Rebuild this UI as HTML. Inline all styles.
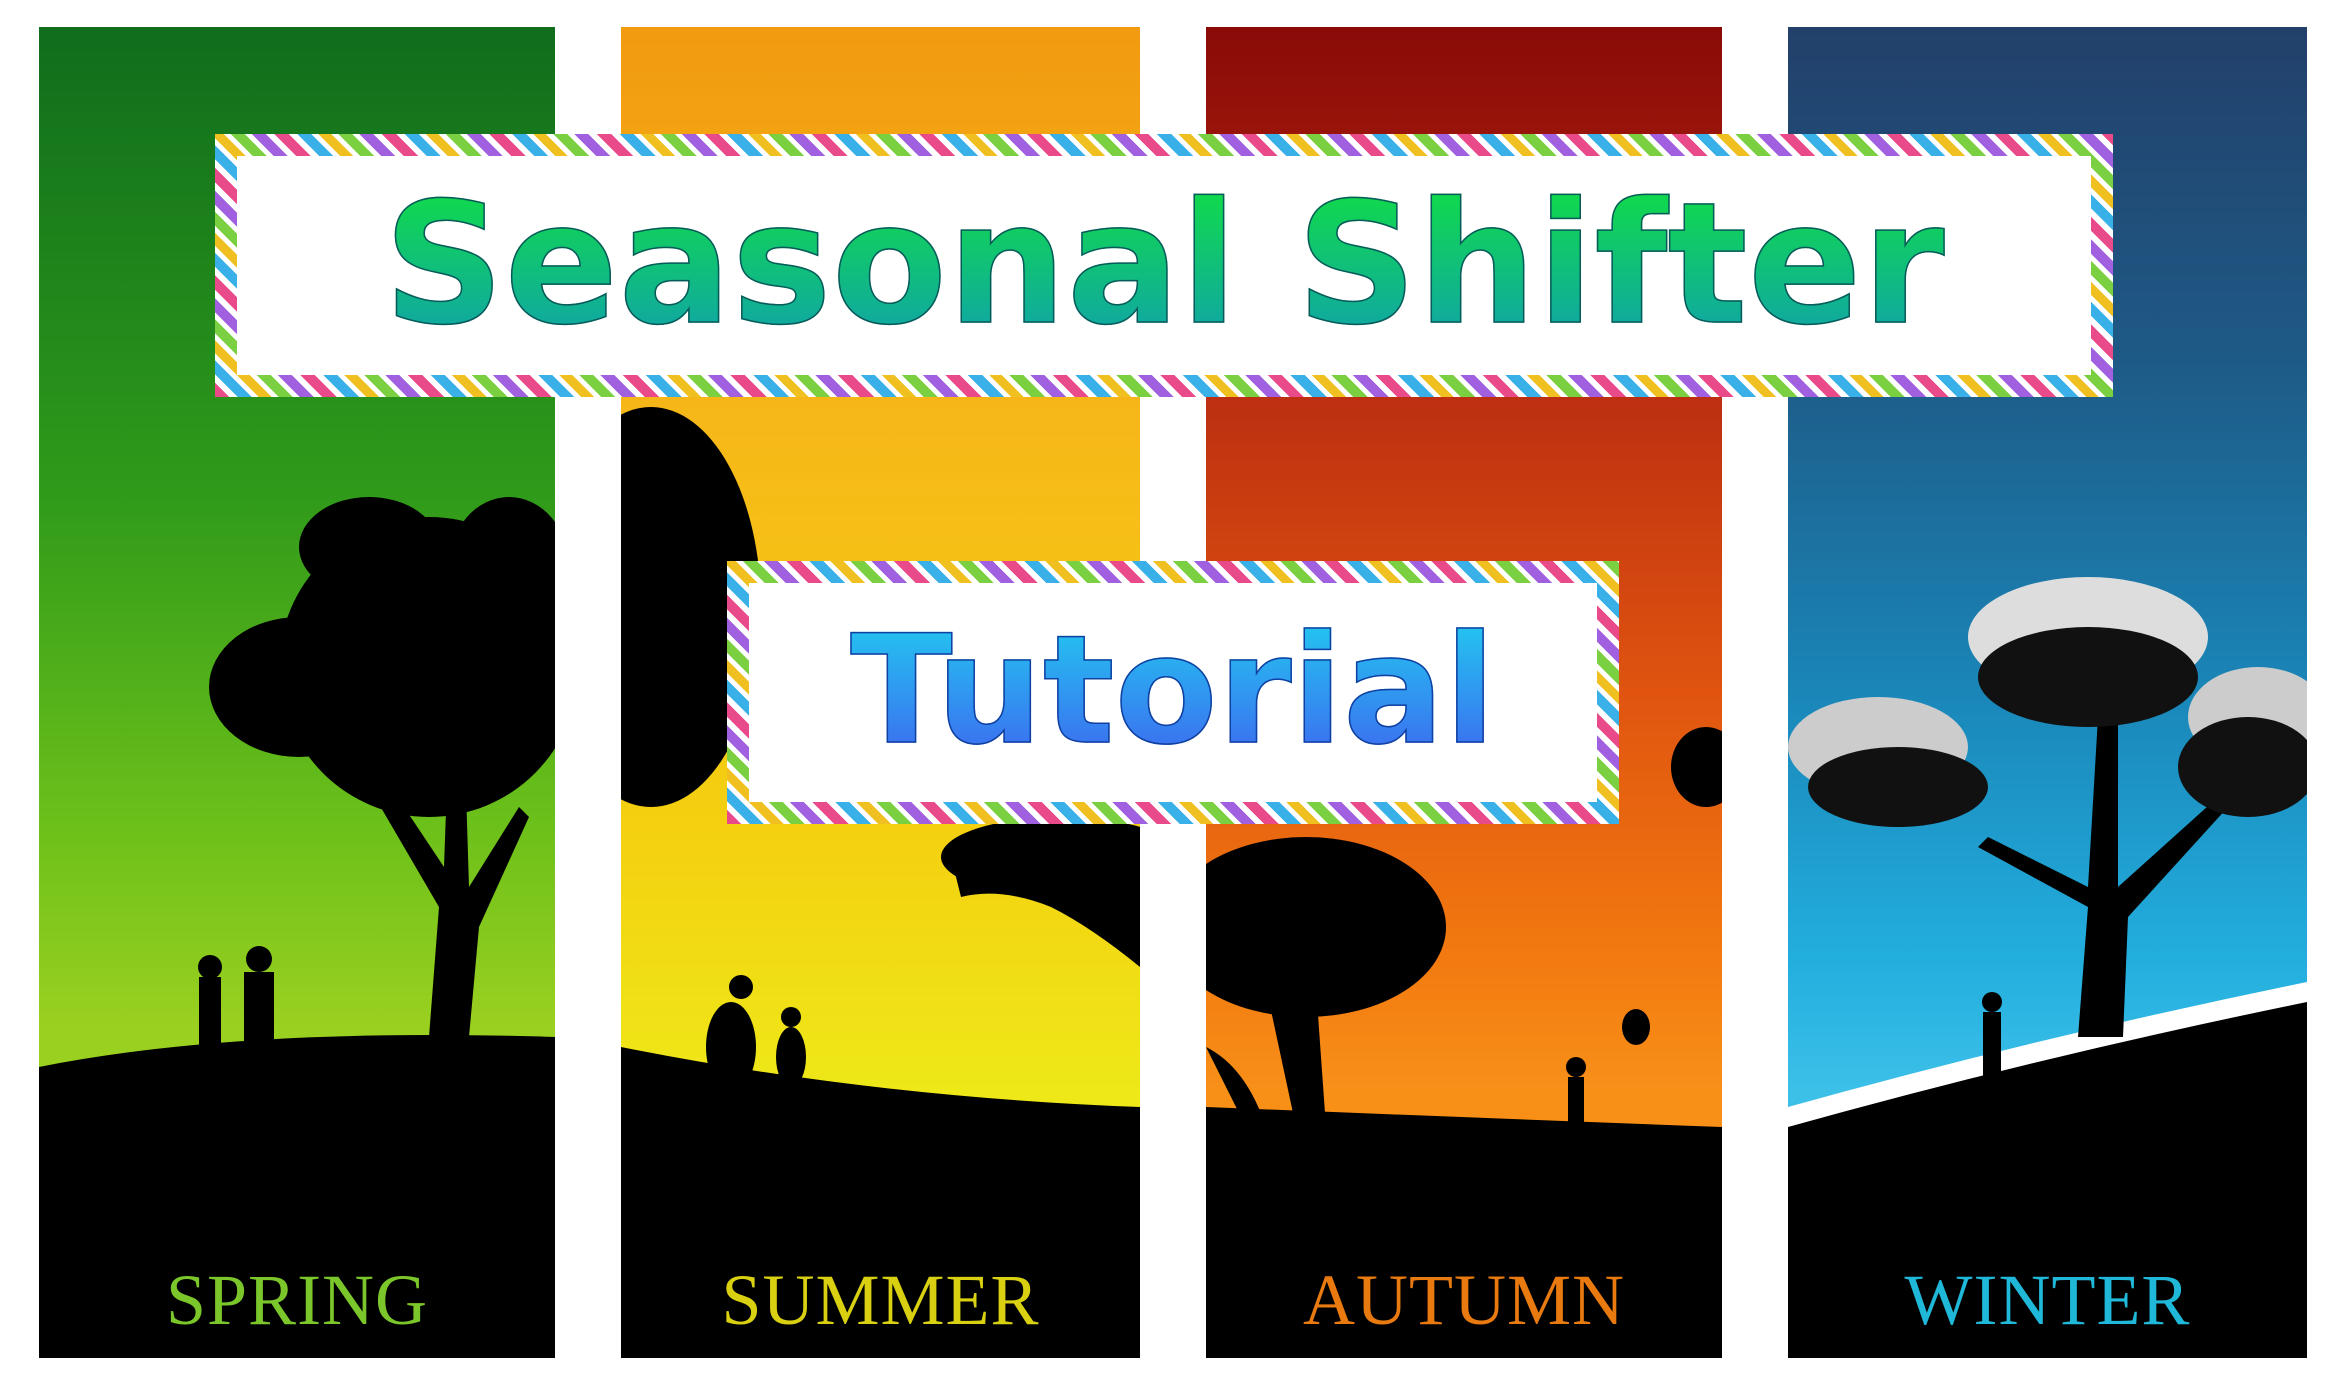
<!DOCTYPE html>
<html><head><meta charset="utf-8"><style>
html,body{margin:0;padding:0;width:2340px;height:1388px;background:#fff;overflow:hidden;position:relative;font-family:"Liberation Sans",sans-serif}
.p{position:absolute;top:27px;height:1331px;overflow:hidden}
.p svg{position:absolute;left:0;top:0}
.lbl{position:absolute;top:1232px;width:100%;text-align:center;font-family:"Liberation Serif",serif;font-size:72px;letter-spacing:1px}
.ban{position:absolute;background:#fff;box-sizing:border-box}
.ban:before{content:"";position:absolute;inset:0;border:22px solid transparent;
border-image:repeating-linear-gradient(45deg,#e84a8a 0 10px,#fff 10px 16px,#3ab0e8 16px 26px,#fff 26px 31px,#f0c020 31px 40px,#fff 40px 45px,#7ad040 45px 55px,#fff 55px 60px,#a060e0 60px 70px,#fff 70px 76px) 22;}
.t{position:absolute;width:100%;text-align:center;font-family:"DejaVu Sans","Liberation Sans",sans-serif;font-weight:bold;-webkit-background-clip:text;background-clip:text;color:transparent;-webkit-text-stroke:1.5px #0a5a5a}
</style></head><body>

<div class="p" style="left:39px;width:516px;background:linear-gradient(#0f6d1c 0%,#2f9a1a 35%,#6cc01a 60%,#9ad020 75%)">
<svg width="516" height="1331"><path d="M0 1040 Q200 1000 516 1010 L516 1331 L0 1331Z" fill="#000"/>
<path d="M390 1010 L400 880 L330 760 L345 750 L405 840 L410 700 L425 700 L430 860 L480 780 L490 790 L440 900 L430 1010Z" fill="#000"/>
<ellipse cx="390" cy="640" rx="150" ry="150" fill="#000"/><ellipse cx="260" cy="660" rx="90" ry="70" fill="#000"/><ellipse cx="470" cy="540" rx="60" ry="70" fill="#000"/><ellipse cx="330" cy="520" rx="70" ry="50" fill="#000"/>
<rect x="160" y="950" width="22" height="80" fill="#000"/><circle cx="171" cy="940" r="12" fill="#000"/>
<rect x="205" y="945" width="30" height="85" fill="#000"/><circle cx="220" cy="932" r="13" fill="#000"/></svg>
<div class="lbl" style="color:#7bc62a">SPRING</div></div>

<div class="p" style="left:621px;width:519px;background:linear-gradient(#f29a10 0%,#f6b818 30%,#f4d010 60%,#eee818 80%)">
<svg width="519" height="1331"><path d="M0 1020 Q250 1070 519 1080 L519 1331 L0 1331Z" fill="#000"/>
<ellipse cx="30" cy="580" rx="110" ry="200" fill="#000"/>
<path d="M330 830 Q420 790 519 820 L519 940 Q470 900 430 880 Q380 860 340 870Z" fill="#000"/>
<ellipse cx="440" cy="830" rx="120" ry="40" fill="#000"/>
<ellipse cx="110" cy="1020" rx="25" ry="45" fill="#000"/><circle cx="120" cy="960" r="12" fill="#000"/>
<ellipse cx="170" cy="1030" rx="15" ry="30" fill="#000"/><circle cx="170" cy="990" r="10" fill="#000"/></svg>
<div class="lbl" style="color:#d8d010">SUMMER</div></div>

<div class="p" style="left:1206px;width:516px;background:linear-gradient(#8a0a08 0%,#b82a10 25%,#e05410 50%,#f27a10 70%,#f89018 80%)">
<svg width="516" height="1331"><path d="M0 1080 Q250 1090 516 1100 L516 1331 L0 1331Z" fill="#000"/>
<ellipse cx="100" cy="900" rx="140" ry="90" fill="#000"/>
<path d="M60 960 L90 1100 L120 1100 L110 960Z M0 1020 Q40 1040 60 1100 L40 1100Z" fill="#000"/>
<circle cx="370" cy="1040" r="10" fill="#000"/><rect x="362" y="1050" width="16" height="45" fill="#000"/>
<ellipse cx="430" cy="1000" rx="14" ry="18" fill="#000"/>
<ellipse cx="500" cy="740" rx="35" ry="40" fill="#000"/></svg>
<div class="lbl" style="color:#e87a10">AUTUMN</div></div>

<div class="p" style="left:1788px;width:519px;background:linear-gradient(#22406a 0%,#1e5a86 25%,#1a86b8 50%,#22aede 70%,#3cc0e8 80%)">
<svg width="519" height="1331"><path d="M0 1090 Q250 1020 519 960 L519 1331 L0 1331Z" fill="#000"/>
<path d="M0 1080 Q250 1010 519 955 L519 975 Q250 1030 0 1100Z" fill="#fff"/>
<path d="M290 1010 L300 880 L190 820 L200 810 L300 860 L310 690 L330 690 L330 860 L430 770 L440 780 L340 890 L335 1010Z" fill="#000"/>
<ellipse cx="300" cy="610" rx="120" ry="60" fill="#ddd"/><ellipse cx="90" cy="720" rx="90" ry="50" fill="#ccc"/><ellipse cx="470" cy="690" rx="70" ry="50" fill="#ccc"/>
<ellipse cx="300" cy="650" rx="110" ry="50" fill="#111"/><ellipse cx="110" cy="760" rx="90" ry="40" fill="#111"/><ellipse cx="460" cy="740" rx="70" ry="50" fill="#111"/>
<rect x="195" y="985" width="18" height="85" fill="#000"/><circle cx="204" cy="975" r="10" fill="#000"/></svg>
<div class="lbl" style="color:#20b8d8">WINTER</div></div>

<div class="ban" style="left:215px;top:134px;width:1898px;height:263px">
<div class="t" style="top:40px;font-size:168px;line-height:180px;background-image:linear-gradient(#10e040,#10a0b0)">Seasonal Shifter</div></div>

<div class="ban" style="left:727px;top:561px;width:892px;height:263px">
<div class="t" style="top:45px;font-size:150px;line-height:170px;background-image:linear-gradient(#20d0f0,#4060f0);-webkit-text-stroke:1.5px #1040a0">Tutorial</div></div>
</body></html>
